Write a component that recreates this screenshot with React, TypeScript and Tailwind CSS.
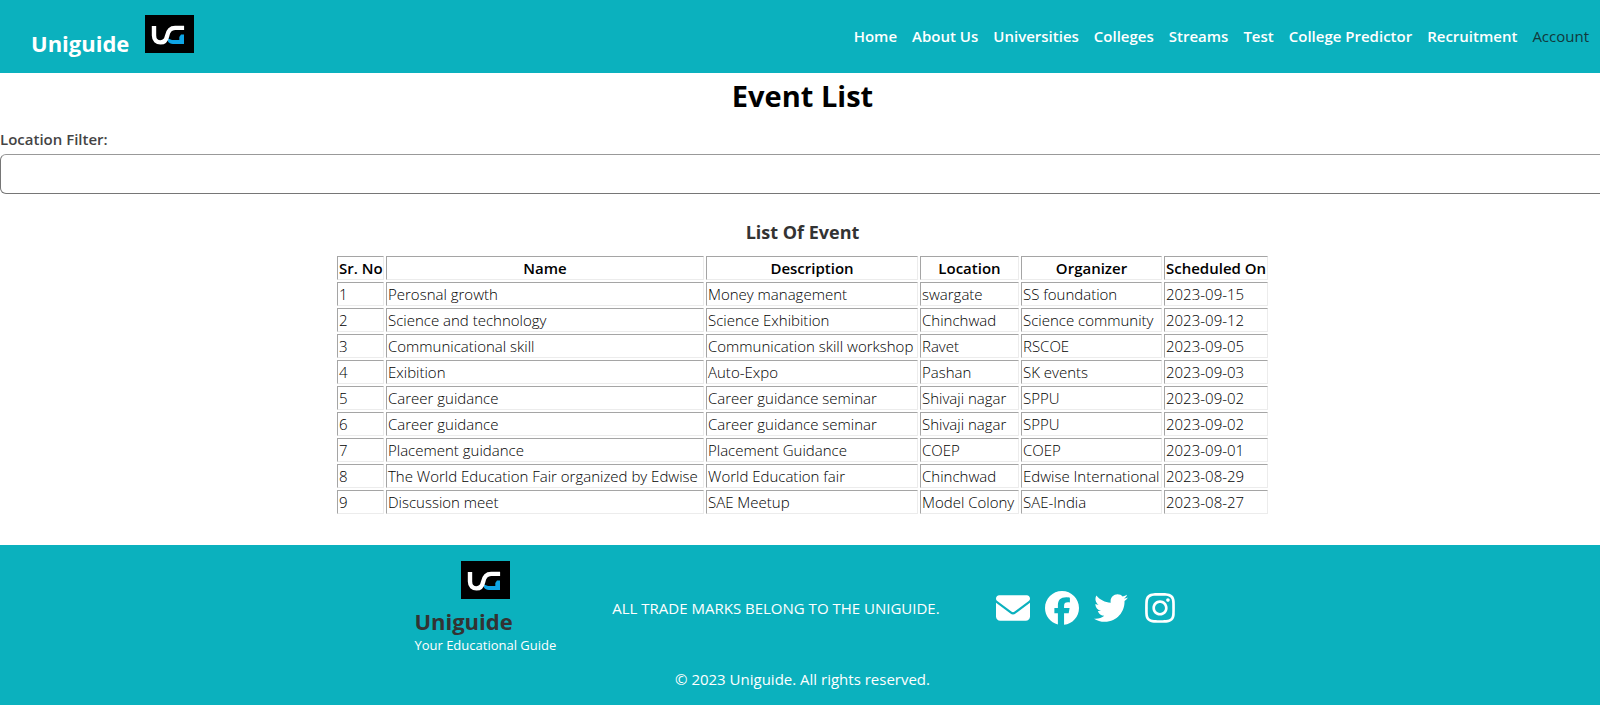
import { FaEnvelope, FaFacebook, FaInstagram, FaTwitter } from "react-icons/fa6";

const navLinks = [
  "Home",
  "About Us",
  "Universities",
  "Colleges",
  "Streams",
  "Test",
  "College Predictor",
  "Recruitment",
];

const columns = [
  { title: "Sr. No", width: "w-[47px]" },
  { title: "Name", width: "w-[318px]" },
  { title: "Description", width: "w-[212px]" },
  { title: "Location", width: "w-[99px]" },
  { title: "Organizer", width: "w-[141px]" },
  { title: "Scheduled On", width: "w-[104px]" },
];

const events = [
  ["1", "Perosnal growth", "Money management", "swargate", "SS foundation", "2023-09-15"],
  ["2", "Science and technology", "Science Exhibition", "Chinchwad", "Science community", "2023-09-12"],
  ["3", "Communicational skill", "Communication skill workshop", "Ravet", "RSCOE", "2023-09-05"],
  ["4", "Exibition", "Auto-Expo", "Pashan", "SK events", "2023-09-03"],
  ["5", "Career guidance", "Career guidance seminar", "Shivaji nagar", "SPPU", "2023-09-02"],
  ["6", "Career guidance", "Career guidance seminar", "Shivaji nagar", "SPPU", "2023-09-02"],
  ["7", "Placement guidance", "Placement Guidance", "COEP", "COEP", "2023-09-01"],
  ["8", "The World Education Fair organized by Edwise", "World Education fair", "Chinchwad", "Edwise International", "2023-08-29"],
  ["9", "Discussion meet", "SAE Meetup", "Model Colony", "SAE-India", "2023-08-27"],
];

const socials = [
  { label: "Email", Icon: FaEnvelope },
  { label: "Facebook", Icon: FaFacebook },
  { label: "Twitter", Icon: FaTwitter },
  { label: "Instagram", Icon: FaInstagram },
];

function Logo() {
  return (
    <svg viewBox="0 0 49 38" className="h-[38px] w-[49px] shrink-0" role="img" aria-label="Uniguide logo">
      <rect width="49" height="38" fill="#000" />
      <path d="M23 23.500 L27 25 H34.300 V22 L36 19.500 H39 V29 H28 C25.500 29 24 28 23 26.500 Z" fill="#0ea5e6" />
      <path d="M9 11v9.500c0 4.500 2.800 6.900 6.500 6.900 4 0 5.800-2.600 6.600-6.400 1-5.200 3-8.100 8-8.100h9" fill="none" stroke="#fff" strokeWidth="4.400" />
    </svg>
  );
}

export default function App() {
  return (
    <div className="overflow-x-hidden bg-white font-['Open_Sans','Noto_Sans',sans-serif] text-[15px] leading-5 text-black">
      <div className="-mr-[5px]">
        <header className="flex h-[73px] items-center justify-between bg-[#0bb1be] pr-4 pl-[31px]">
          <a href="#" className="flex items-start gap-4">
            <span className="pt-3 text-[22px] leading-8 font-bold text-white">Uniguide</span>
            <Logo />
          </a>
          <nav className="flex gap-[15px] pb-0.5">
            {navLinks.map((link) => (
              <a key={link} href="#" className="font-semibold whitespace-nowrap text-white">
                {link}
              </a>
            ))}
            <a href="#" className="text-[#12383b]">
              Account
            </a>
          </nav>
        </header>

        <main>
          <h1 className="pt-[3px] text-center text-[29px] leading-10 font-bold">Event List</h1>
          <label htmlFor="location" className="mt-[13px] block font-semibold text-[#444]">
            Location Filter:
          </label>
          <input
            id="location"
            type="text"
            className="mt-[5px] block h-10 w-full rounded-md border border-[#767676] border-t-[#999] px-3 outline-none"
          />
          <h2 className="mt-6 text-center text-lg leading-7 font-bold text-[#333]">List Of Event</h2>
          <table className="mx-auto mt-2 w-[935px] table-fixed border-separate border-spacing-[2px]">
            <thead>
              <tr className="h-6">
                {columns.map(({ title, width }) => (
                  <th
                    key={title}
                    scope="col"
                    className={`${width} border border-t-[#a5a5a5] border-r-[#ececec] border-b-[#ececec] border-l-[#a5a5a5] p-px text-center font-semibold whitespace-nowrap`}
                  >
                    {title}
                  </th>
                ))}
              </tr>
            </thead>
            <tbody>
              {events.map((row) => (
                <tr key={row[0]} className="h-6">
                  {row.map((cell, i) => (
                    <td
                      key={i}
                      className="border border-t-[#a5a5a5] border-r-[#ececec] border-b-[#ececec] border-l-[#a5a5a5] p-px font-light whitespace-nowrap"
                    >
                      {cell}
                    </td>
                  ))}
                </tr>
              ))}
            </tbody>
          </table>
        </main>

        <footer className="mt-[29px] bg-[#0bb1be] pt-4 pb-4 text-white">
          <div className="flex items-center justify-center pr-3.5">
            <div className="mr-14">
              <div className="flex justify-center">
                <Logo />
              </div>
              <p className="mt-2 text-[22px] leading-7 font-bold text-[#333]">Uniguide</p>
              <p className="text-[13px] leading-5">Your Educational Guide</p>
            </div>
            <p>ALL TRADE MARKS BELONG TO THE UNIGUIDE.</p>
            <div className="ml-14 flex gap-[15px]">
              {socials.map(({ label, Icon }) => (
                <a key={label} href="#" aria-label={label}>
                  <Icon className="size-[34px]" />
                </a>
              ))}
            </div>
          </div>
          <p className="mt-3.5 text-center">© 2023 Uniguide. All rights reserved.</p>
        </footer>
      </div>
    </div>
  );
}
